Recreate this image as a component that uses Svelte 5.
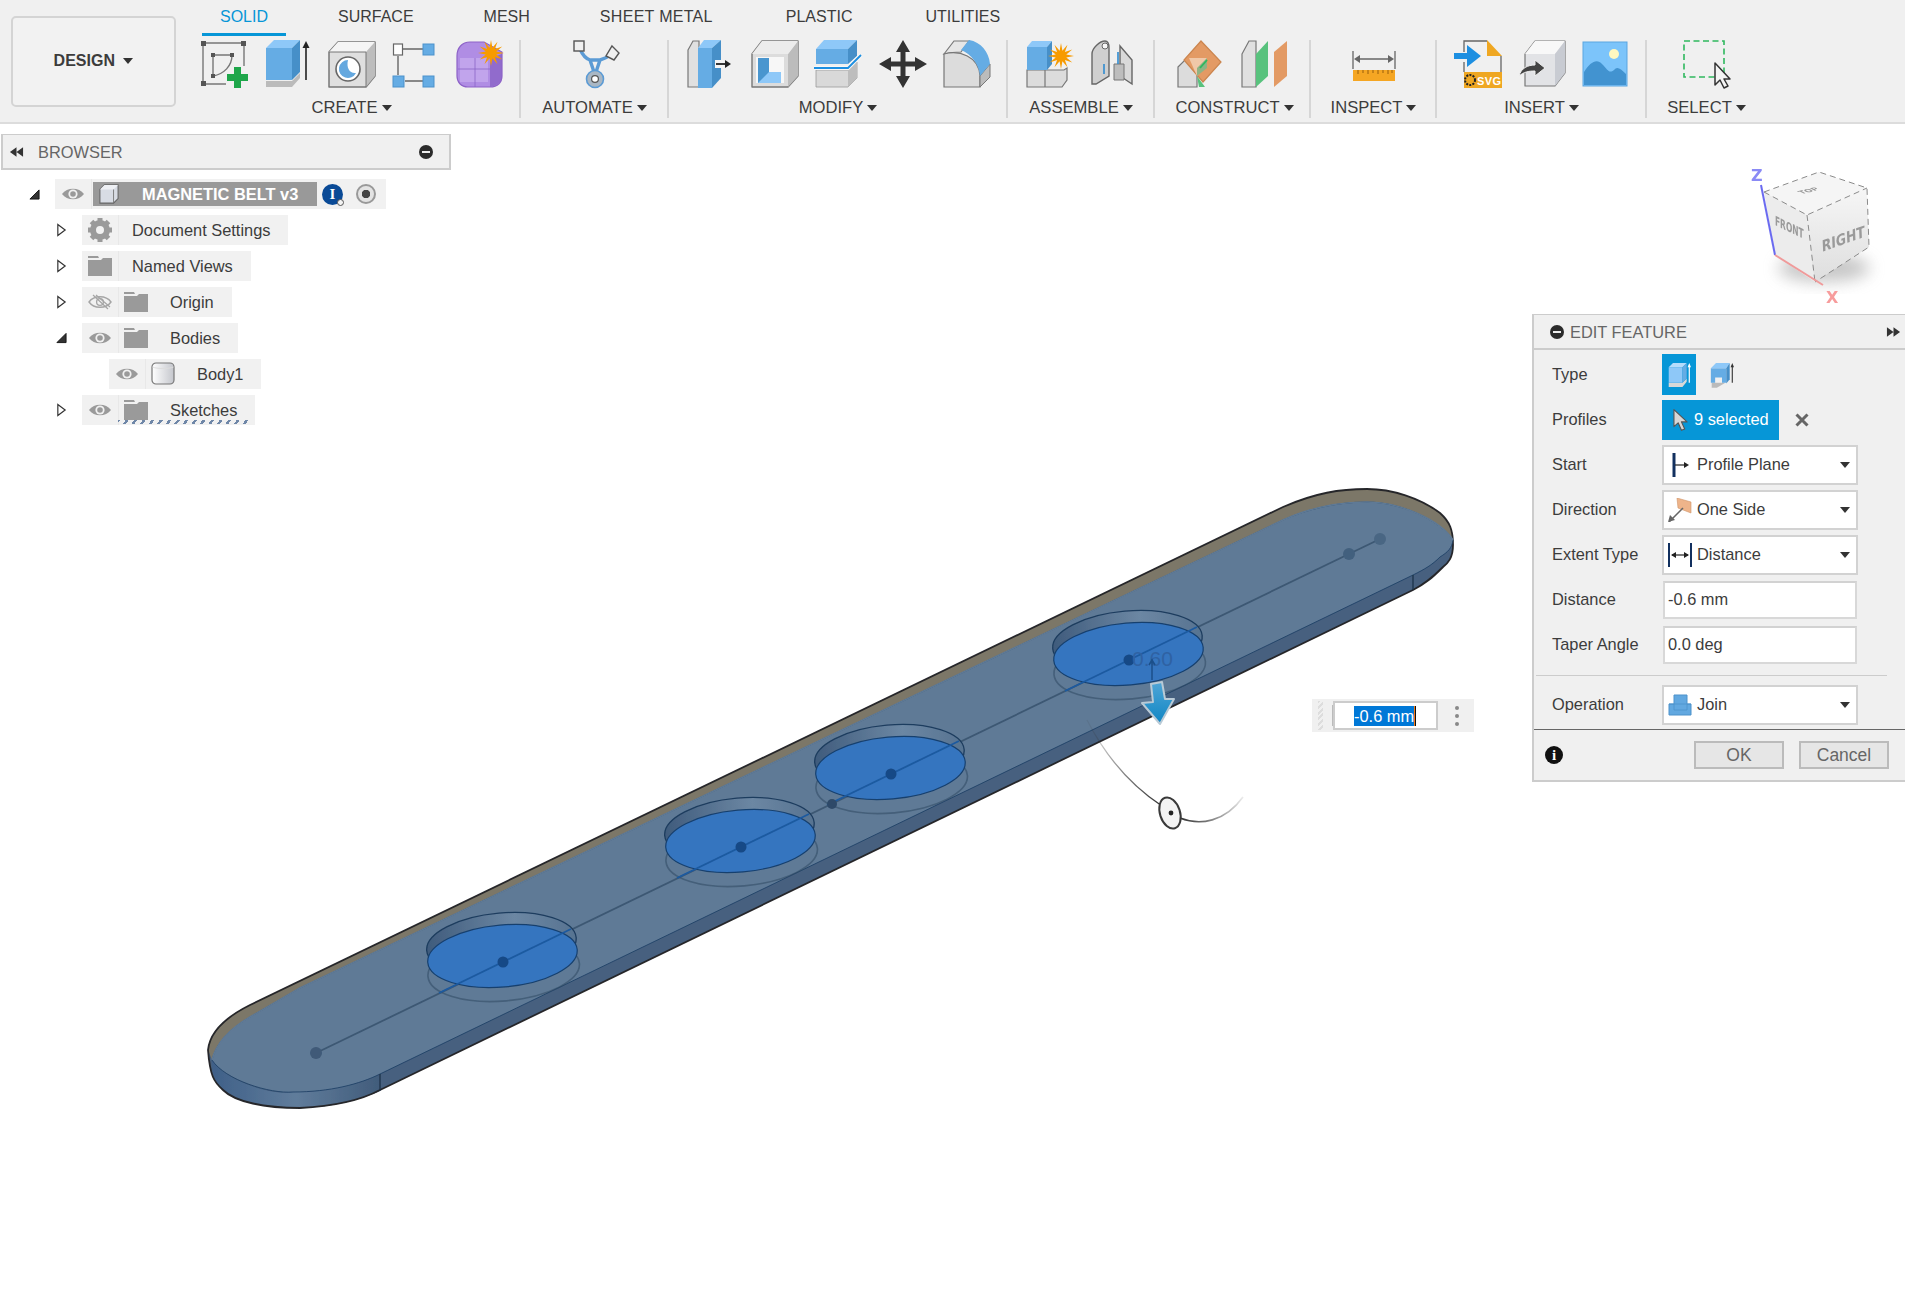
<script lang="ts">
	const tabs = ["SOLID", "SURFACE", "MESH", "SHEET METAL", "PLASTIC", "UTILITIES"];

	const treeRows = [
		{ name: "Document Settings", depth: 1, arrow: "closed", eye: null, icon: "gear" },
		{ name: "Named Views", depth: 1, arrow: "closed", eye: null, icon: "folder" },
		{ name: "Origin", depth: 1, arrow: "closed", eye: "off", icon: "folder" },
		{ name: "Bodies", depth: 1, arrow: "open", eye: "on", icon: "folder" },
		{ name: "Body1", depth: 2, arrow: null, eye: "on", icon: "body" },
		{ name: "Sketches", depth: 1, arrow: "closed", eye: "on", icon: "folder", wavy: true }
	];

	// hole centres along the sketch line of the belt
	const holes = [
		[503, 962],
		[741, 847],
		[891, 774],
		[1129, 660]
	];

	const outline =
		"M208 1050C210 1030 228 1016 250 1005L1283 507C1315 493 1340 489 1367 489C1392 489 1420 498 1440 513C1450 522 1453 530 1453 545C1453 558 1448 563 1443 567C1432 578 1425 584 1413 590L380 1090C365 1098 340 1106 300 1108C265 1108 235 1102 223 1090C214 1082 210 1076 208 1050Z";

	function star(cx: number, cy: number, R: number, r: number, n = 12) {
		const pts = [];
		for (let i = 0; i < n * 2; i++) {
			const a = (Math.PI * i) / n;
			const d = i % 2 ? r : R;
			pts.push(`${(cx + Math.sin(a) * d).toFixed(1)},${(cy - Math.cos(a) * d).toFixed(1)}`);
		}
		return pts.join(" ");
	}
</script>

{#snippet eye(state)}
	<svg class="mini" viewBox="0 0 24 16">
		<path d="M1 8C6 1 18 1 23 8C18 15 6 15 1 8Z" fill={state === "on" ? "#9a9a9a" : "none"} stroke={state === "on" ? "none" : "#a5a5a5"} stroke-width="1.4" />
		{#if state === "on"}
			<circle cx="12" cy="8" r="4.6" fill="#f0f0f0" />
			<circle cx="12" cy="8" r="2.8" fill="#9a9a9a" />
		{:else}
			<circle cx="12" cy="8" r="3.4" fill="none" stroke="#a5a5a5" stroke-width="1.3" />
			<path d="M5 1L20 15M8 1L22 13" stroke="#a5a5a5" stroke-width="1.2" />
		{/if}
	</svg>
{/snippet}

{#snippet treeIcon(kind)}
	{#if kind === "gear"}
		<svg class="mini tall" viewBox="0 0 24 24">
			<circle cx="12" cy="12" r="7" fill="none" stroke="#9a9a9a" stroke-width="6" />
			<g stroke="#9a9a9a" stroke-width="5">
				<path d="M12 0V5M12 19V24M0 12H5M19 12H24M3.5 3.5L7 7M17 17L20.5 20.5M20.5 3.5L17 7M3.5 20.5L7 17" />
			</g>
		</svg>
	{:else if kind === "folder"}
		<svg class="mini tall" viewBox="0 0 24 20">
			<path d="M0 0H10L11 2H0ZM0 4H13L15 2H24V20H0Z" fill="#9a9a9a" />
		</svg>
	{:else}
		<svg class="mini tall" viewBox="0 0 24 24">
			<defs>
				<linearGradient id="bodyFill" x1="0" x2="1">
					<stop offset="0" stop-color="#fff" />
					<stop offset="1" stop-color="#c4c6cc" />
				</linearGradient>
			</defs>
			<rect x="1" y="1" width="22" height="21" rx="4" fill="url(#bodyFill)" stroke="#777" stroke-width="1.2" />
			<path d="M1.5 5C6 7 18 7 22.5 5" fill="none" stroke="#ddd" />
		</svg>
	{/if}
{/snippet}

{#snippet caret()}
	<i class="caret"></i>
{/snippet}

<div class="page">
	<svg class="model" viewBox="0 0 1905 1312">
		<defs>
			<linearGradient id="wall" x1="0" x2="1">
				<stop offset="0" stop-color="#3f5b7c" />
				<stop offset="0.6" stop-color="#6c87a3" />
				<stop offset="1" stop-color="#577391" />
			</linearGradient>
			<linearGradient id="sideArc" x1="0" x2="1">
				<stop offset="0" stop-color="#3f6088" />
				<stop offset="0.5" stop-color="#607c9b" />
				<stop offset="1" stop-color="#415c7b" />
			</linearGradient>
			<linearGradient id="arrowFill" x1="0" x2="0" y1="0" y2="1">
				<stop offset="0" stop-color="#4fa5d6" />
				<stop offset="1" stop-color="#0f86c4" />
			</linearGradient>
			<linearGradient id="arcIn" gradientUnits="userSpaceOnUse" x1="1090" y1="725" x2="1160" y2="805">
				<stop offset="0" stop-color="#333" stop-opacity="0.1" />
				<stop offset="1" stop-color="#333" />
			</linearGradient>
			<linearGradient id="arcOut" gradientUnits="userSpaceOnUse" x1="1180" y1="818" x2="1243" y2="797">
				<stop offset="0" stop-color="#333" />
				<stop offset="1" stop-color="#333" stop-opacity="0.1" />
			</linearGradient>
			<filter id="soft" x="-5%" y="-5%" width="110%" height="110%">
				<feGaussianBlur stdDeviation="0.5" />
			</filter>
		</defs>

		<g filter="url(#soft)">
			<!-- silhouette with side wall -->
			<path d={outline} fill="#46607f" />
			<path d="M212 1060C225 1080 270 1096 293 1092C330 1092 360 1084 380 1074V1091C360 1100 335 1107 300 1108C265 1108 235 1102 223 1090C214 1082 212 1075 212 1060Z" fill="url(#sideArc)" />
			<!-- back band -->
			<path
				d="M208 1050C210 1030 228 1016 250 1005L1283 507C1315 493 1340 489 1367 489C1392 489 1420 498 1440 513C1450 522 1453 530 1453 540C1440 520 1400 502 1367 502C1335 502 1305 510 1283 520L300 988L250 1017C228 1030 216 1044 212 1060Z"
				fill="#7c7768"
			/>
			<path d={outline} fill="none" stroke="#26272a" stroke-width="1.8" />
			<!-- top face -->
			<path
				d="M212 1060C216 1044 228 1030 250 1017L300 988L1283 520C1305 510 1335 502 1367 502C1400 502 1440 520 1453 540C1452 548 1448 552 1440 557C1432 565 1425 569 1413 575L380 1074C360 1084 330 1092 293 1092C270 1094 225 1080 212 1060Z"
				fill="#5f7a96"
				stroke="#173a60"
				stroke-width="1"
				stroke-opacity="0.75"
			/>
			<path d="M212 1060C216 1044 228 1030 250 1017L300 988L1283 520C1305 510 1335 502 1367 502C1400 502 1440 520 1453 540" fill="none" stroke="#5f7a96" stroke-width="1.6" />
			<path d="M380 1074V1091M1413 575V590" stroke="#1c2f45" stroke-width="1.2" />

			<!-- sketch line -->
			<path d="M316 1053L1380 539" stroke="#3d5873" stroke-width="1.8" />

			{#each holes as [x, y]}
				<g transform="rotate(-5 {x} {y})">
					<ellipse cx={x} cy={y + 8} rx="76" ry="31" fill="none" stroke="#2e4863" stroke-opacity="0.55" stroke-width="1.6" />
					<ellipse cx={x} cy={y - 18} rx="75" ry="31" fill="url(#wall)" stroke="#1d3c5e" stroke-width="1.3" />
					<ellipse cx={x} cy={y - 6} rx="75" ry="31" fill="#3574bf" stroke="#17406e" stroke-width="1.2" />
				</g>
				<path d="M{x - 64} {y + 31}L{x + 68} {y - 33}" stroke="#1c5aa0" stroke-width="1.8" />
				<circle cx={x} cy={y} r="5.5" fill="#174a86" />
			{/each}

			<circle cx="316" cy="1053" r="6" fill="#3f5a78" />
			<circle cx="832" cy="804" r="5" fill="#2f4a68" />
			<circle cx="1349" cy="554" r="6" fill="#42607e" />
			<circle cx="1380" cy="539" r="6" fill="#4a6683" />
		</g>

		<text x="1132" y="666" class="dim-text">0.60</text>
		<path d="M1152 659V680M1149 665L1152 660L1155 665" fill="none" stroke="#1b4f8a" stroke-width="1.5" />

		<!-- drag arrow -->
		<path d="M1151 684L1162 682L1165 699L1174 699L1160 724L1142 703L1153 702Z" fill="url(#arrowFill)" stroke="#b9cad6" stroke-width="2" stroke-linejoin="round" />

		<!-- angle handle -->
		<path d="M1087 720C1105 755 1130 785 1162 806" fill="none" stroke="url(#arcIn)" stroke-width="1.3" />
		<path d="M1180 818C1200 826 1225 822 1243 797" fill="none" stroke="url(#arcOut)" stroke-width="1.6" />
		<ellipse cx="1170" cy="813" rx="10" ry="16" transform="rotate(-18 1170 813)" fill="#f3f3f3" stroke="#3a3a3a" stroke-width="2" />
		<circle cx="1171" cy="813" r="2.4" fill="#222" />
	</svg>

	<header class="toolbar">
		<button class="design" type="button">DESIGN {@render caret()}</button>
		<div class="ribbon">
			<nav class="tabs">
				{#each tabs as tab, i}
					<span class="tab" class:active={i === 0}>{tab}</span>
				{/each}
			</nav>
			<div class="groups">
				<section class="group g-create">
					<div class="icons">
						<svg class="tool" viewBox="0 0 48 48">
							<path d="M3 3H44M3 3V44M3 44H26M44 3V26M13 15H32M13 15V36M13 36C24 34 32 26 32 15" fill="none" stroke="#777" stroke-width="1.4" />
							<path d="M1 1h5v5H1zM41 1h5v5h-5zM1 41h5v5H1zM11 13h4v4h-4zM30 13h4v4h-4zM11 34h4v4h-4z" fill="#555" />
							<path d="M34 27h7v7h7v7h-7v7h-7v-7h-7v-7h7z" fill="#1ea64a" />
						</svg>
						<svg class="tool" viewBox="0 0 48 48">
							<path d="M2 41H28L36 33V38L28 47H2Z" fill="#bbb" />
							<path d="M2 8H28V40H2Z" fill="#65ace4" />
							<path d="M2 8L10 0H36L28 8Z" fill="#8ec8f8" />
							<path d="M28 8L36 0V32L28 40Z" fill="#468fc8" />
							<path d="M42 6V40" stroke="#222" stroke-width="1.6" />
							<path d="M38.5 8L42 1L45.5 8Z" fill="#222" />
						</svg>
						<svg class="tool" viewBox="0 0 48 48">
							<path d="M1 12L10 2H47V36L38 47H1Z" fill="#dfdfdf" stroke="#777" stroke-width="1.5" stroke-linejoin="round" />
							<path d="M1 12L10 2H47L38 12Z" fill="#f5f5f5" />
							<path d="M38 12L47 2V36L38 47Z" fill="#bdbdbd" />
							<path d="M1 12H38V47" fill="none" stroke="#777" stroke-width="1" />
							<circle cx="20" cy="29" r="12" fill="#fff" stroke="#666" stroke-width="1.6" />
							<path d="M20 20A9 9 0 1 0 28 33C22 34 18 28 20 20Z" fill="#64a8df" />
						</svg>
						<svg class="tool" viewBox="0 0 48 48">
							<path d="M10 9H31M6 16V35M13 41H31" stroke="#666" stroke-width="1.4" />
							<rect x="1.5" y="4" width="9" height="11" fill="#fff" stroke="#666" stroke-width="1.2" />
							<rect x="31" y="4" width="11" height="11" fill="#65ace4" stroke="#4d92cb" />
							<rect x="1" y="36" width="11" height="11" fill="#65ace4" stroke="#4d92cb" />
							<rect x="31" y="36" width="11" height="11" fill="#65ace4" stroke="#4d92cb" />
						</svg>
						<svg class="tool" viewBox="0 0 48 48">
							<path d="M1 16C1 8 6 2 14 2H28L46 12V36C46 42 42 47 34 47H12C5 47 1 42 1 36Z" fill="#b08de4" stroke="#8e63c8" stroke-width="1.2" />
							<path d="M4 18H32V42H4Z" fill="#c9aef0" opacity="0.7" />
							<path d="M34 18L46 14V36C46 42 40 46 34 47Z" fill="#8a63c6" opacity="0.8" />
							<path d="M2 29H34M19 18V47" fill="none" stroke="#8c64c8" stroke-width="0.8" />
							<polygon points={star(35, 13, 13, 5.5)} fill="#f79b00" />
						</svg>
					</div>
					<div class="label">CREATE{@render caret()}</div>
				</section>

				<section class="group g-automate">
					<div class="icons">
						<svg class="tool" viewBox="0 0 48 48">
							<path d="M9 9C12 16 16 19 19 20H29C33 19 37 17 41 14M19 20L23 32M29 20L25 32" fill="none" stroke="#5b9bd5" stroke-width="3.4" />
							<circle cx="24" cy="39" r="8.5" fill="#a9b7c4" stroke="#5b9bd5" stroke-width="1.6" />
							<circle cx="24" cy="39" r="3.4" fill="#fff" stroke="#555" stroke-width="1.2" />
							<rect x="3" y="1" width="10" height="10" fill="#f0f0f0" stroke="#555" stroke-width="1.4" />
							<path d="M41 6L48 13L43 20L35 16Z" fill="#f0f0f0" stroke="#555" stroke-width="1.4" />
						</svg>
					</div>
					<div class="label">AUTOMATE{@render caret()}</div>
				</section>

				<section class="group g-modify">
					<div class="icons">
						<svg class="tool" viewBox="0 0 48 48">
							<path d="M1 10L6 1H12V47H1Z" fill="#e0e0e0" stroke="#777" stroke-width="1.2" />
							<path d="M11 8H25V48H11Z" fill="#65ace4" />
							<path d="M11 8L17 0H34L25 8Z" fill="#8ec8f8" />
							<path d="M25 8L34 0V38L25 48Z" fill="#468fc8" />
							<path d="M28 20H37V28H28Z" fill="#f5f5f5" />
							<path d="M29 24H39" stroke="#222" stroke-width="1.8" />
							<path d="M38 20L44 24L38 28Z" fill="#222" />
						</svg>
						<svg class="tool" viewBox="0 0 48 48">
							<path d="M1 14L11 1H47V36L37 47H1Z" fill="#dcdcdc" stroke="#777" stroke-width="1.4" stroke-linejoin="round" />
							<path d="M37 14L47 1V36L37 47Z" fill="#bcbcbc" />
							<path d="M1 14L11 1H47L37 14Z" fill="#ececec" />
							<rect x="5" y="17" width="28" height="26" fill="#f7f7f7" />
							<path d="M7 18H18V32H30V43H7Z" fill="#4a96cf" />
							<path d="M18 32H30V43H7Z" fill="#8ec8f8" />
						</svg>
						<svg class="tool" viewBox="0 0 48 48">
							<path d="M1 30H33L42 22V38L33 47H1Z" fill="#d9d9d9" stroke="#999" stroke-width="0.8" />
							<path d="M33 30L42 22V38L33 47Z" fill="#bdbdbd" />
							<path d="M1 9H33V24H1Z" fill="#65ace4" />
							<path d="M1 9L9 0H42L33 9Z" fill="#8ec8f8" />
							<path d="M33 9L42 0V16L33 24Z" fill="#468fc8" />
							<path d="M-1 28H33L46 15" fill="none" stroke="#f7f7f7" stroke-width="4" />
							<path d="M-1 28H33L46 15" fill="none" stroke="#1d8fe1" stroke-width="1.8" />
						</svg>
						<svg class="tool" viewBox="0 0 48 48">
							<path d="M24 0L31 12H26.5V21.5H36V17L48 24L36 31V26.5H26.5V36H31L24 48L17 36H21.5V26.5H12V31L0 24L12 17V21.5H21.5V12H17Z" fill="#333" />
						</svg>
						<svg class="tool" viewBox="0 0 48 48">
							<path d="M1 14L11 1H26L18 12C10 12 5 13 1 14Z" fill="#e6e6e6" stroke="#777" stroke-width="1.2" />
							<path d="M1 14C16 10 36 16 37 36V47H1Z" fill="#dcdcdc" stroke="#777" stroke-width="1.2" />
							<path d="M37 36L47 24V37L37 47Z" fill="#bcbcbc" stroke="#777" stroke-width="1" />
							<path d="M18 10L26 0C38 2 46 12 47 24L37 36C36 24 28 14 18 10Z" fill="#65ace4" />
						</svg>
					</div>
					<div class="label">MODIFY{@render caret()}</div>
				</section>

				<section class="group g-assemble">
					<div class="icons">
						<svg class="tool" viewBox="0 0 48 48">
							<path d="M1 30H19V47H1ZM19 30H38L41 28V40L36 47H19Z" fill="#dcdcdc" stroke="#777" stroke-width="1.2" />
							<path d="M1 7H21V30H1Z" fill="#65ace4" />
							<path d="M1 7L6 1H26L21 7Z" fill="#8ec8f8" />
							<path d="M21 7L26 1V24L21 30Z" fill="#468fc8" />
							<polygon points={star(35, 16, 13, 5.5)} fill="#f79b00" />
						</svg>
						<svg class="tool" viewBox="0 0 48 48">
							<path d="M2 14C2 8 10 1 15 1C18 1 19 4 19 8V36L6 44H2Z" fill="#cfcfcf" stroke="#666" stroke-width="1.4" />
							<ellipse cx="15" cy="6" rx="3" ry="3" fill="#f5f5f5" stroke="#666" />
							<path d="M30 6L42 20V44L30 36Z" fill="#d9d9d9" stroke="#666" stroke-width="1.4" />
							<path d="M24 24H34V40H24Z" fill="#bdbdbd" stroke="#777" />
							<path d="M14 24V34M28 12V24" stroke="#2f8bd0" stroke-width="1.6" />
						</svg>
					</div>
					<div class="label">ASSEMBLE{@render caret()}</div>
				</section>

				<section class="group g-construct">
					<div class="icons">
						<svg class="tool" viewBox="0 0 48 48">
							<path d="M1 27L8 20H20V47H1Z" fill="#dcdcdc" stroke="#777" stroke-width="1.2" />
							<path d="M20 36L22 47H28Z" fill="#58c27d" />
							<path d="M24 1L44 22L26 42L7 20Z" fill="#e39a64" stroke="#cb854e" stroke-width="1.2" />
							<path d="M12 18H30L26 30L20 36Z" fill="#f0c8a8" />
							<path d="M20 36V28L30 18V28Z" fill="#8fb384" />
							<path d="M23 28L30 20" stroke="#2fb85e" stroke-width="1.8" />
						</svg>
						<svg class="tool" viewBox="0 0 48 48">
							<path d="M1 14L8 1H15V47H1Z" fill="#e0e0e0" stroke="#777" stroke-width="1.2" />
							<path d="M15 14L27 1V36L15 47Z" fill="#58c27d" />
							<path d="M33 12L46 1V36L33 47Z" fill="#e39a64" />
						</svg>
					</div>
					<div class="label construct-label">CONSTRUCT{@render caret()}</div>
				</section>

				<section class="group g-inspect">
					<div class="icons">
						<svg class="tool" viewBox="0 0 48 48">
							<path d="M3 11V29M45 11V29M7 19H41" stroke="#666" stroke-width="1.3" />
							<path d="M4 19L10 15V23ZM44 19L38 15V23Z" fill="#666" />
							<rect x="3" y="30" width="42" height="11" fill="#f5a623" />
							<path d="M8 30v4M13 30v3M18 30v4M23 30v3M28 30v4M33 30v3M38 30v4M42 30v3" stroke="#a86a10" stroke-width="1.2" />
						</svg>
					</div>
					<div class="label">INSPECT{@render caret()}</div>
				</section>

				<section class="group g-insert">
					<div class="icons">
						<svg class="tool" viewBox="0 0 48 48">
							<path d="M10 12V1H33M47 16V32M10 22V32" fill="none" stroke="#666" stroke-width="1.3" />
							<path d="M33 0L48 16H33Z" fill="#efa722" />
							<path d="M0 13H13V5L27 16L13 27V19H0Z" fill="#1d8fe1" />
							<rect x="10" y="32" width="38" height="16" fill="#efa722" />
							<circle cx="16" cy="40" r="5" fill="none" stroke="#222" stroke-width="2" stroke-dasharray="2 1.2" />
							<text x="23" y="45" class="svg-tag">SVG</text>
						</svg>
						<svg class="tool" viewBox="0 0 48 48">
							<path d="M7 14L17 1H47V33L37 46H7Z" fill="#e2e3e6" stroke="#777" stroke-width="1.2" stroke-linejoin="round" />
							<path d="M7 14L17 1H47L37 14Z" fill="#f8f8f8" />
							<path d="M37 14L47 1V33L37 46Z" fill="#c8cbd2" />
							<path d="M1 36C3 28 10 25 17 25V20L27 28L17 36V31C10 31 6 32 1 36Z" fill="#444" stroke="#f0f0f0" stroke-width="1" />
						</svg>
						<svg class="tool" viewBox="0 0 48 48">
							<rect x="1" y="2" width="44" height="44" fill="#7cc4fa" stroke="#5aa5e0" />
							<circle cx="32" cy="14" r="5" fill="#fff8c0" />
							<path d="M2 45V32C8 22 15 18 20 24C26 30 27 34 32 30C35 26 38 28 44 34V45Z" fill="#4293d0" />
						</svg>
					</div>
					<div class="label">INSERT{@render caret()}</div>
				</section>

				<section class="group g-select">
					<div class="icons">
						<svg class="tool" viewBox="0 0 48 48">
							<rect x="1" y="1" width="40" height="36" fill="none" stroke="#2fb85e" stroke-width="1.6" stroke-dasharray="6 3.5" />
							<path d="M32 23V45L37 40L41 48L45 46L41 39H47Z" fill="#f4f4f4" stroke="#333" stroke-width="1.5" stroke-linejoin="round" />
						</svg>
					</div>
					<div class="label">SELECT{@render caret()}</div>
				</section>
			</div>
		</div>
	</header>

	<section class="browser">
		<div class="browser-head">
			<svg class="double" viewBox="0 0 16 10"><path d="M8 0V10L1 5ZM15 0V10L8 5Z" fill="#333" /></svg>
			<span>BROWSER</span>
			<span class="minus"></span>
		</div>

		<ul class="tree">
			<li class="tree-row root">
				<span class="arrow"><svg viewBox="0 0 12 12"><path d="M11 1V11H1Z" fill="#333" stroke="#111" /></svg></span>
				<div class="chip">
					<span class="slot eye-slot">{@render eye("on")}</span>
					<div class="root-name">
						<svg class="mini cube" viewBox="0 0 22 22">
							<path d="M1 6L6 1H21V16L16 21H1Z" fill="#d8dce4" stroke="#666" stroke-width="1.2" />
							<path d="M1 6L6 1H21L16 6Z" fill="#eef0f4" />
							<path d="M16 6V21" stroke="#777" />
						</svg>
						<span>MAGNETIC BELT v3</span>
					</div>
					<span class="badge">I<i></i></span>
					<span class="radio"></span>
				</div>
			</li>
			{#each treeRows as row}
				<li class="tree-row" style="margin-left: {row.depth * 27}px">
					<span class="arrow">
						{#if row.arrow === "closed"}
							<svg viewBox="0 0 12 14"><path d="M2 1L10 7L2 13Z" fill="#fff" stroke="#333" stroke-width="1.3" /></svg>
						{:else if row.arrow === "open"}
							<svg viewBox="0 0 12 12"><path d="M11 1V11H1Z" fill="#333" stroke="#111" /></svg>
						{/if}
					</span>
					<div class="chip" class:wavy={row.wavy}>
						{#if row.eye}
							<span class="slot eye-slot">{@render eye(row.eye)}</span>
							<span class="plain-icon">{@render treeIcon(row.icon)}</span>
						{:else}
							<span class="slot eye-slot">{@render treeIcon(row.icon)}</span>
						{/if}
						<span class="row-name" class:after-icon={row.eye}>{row.name}</span>
					</div>
				</li>
			{/each}
		</ul>
	</section>

	<svg class="viewcube" viewBox="0 0 185 170">
		<defs>
			<linearGradient id="cubeRight" x1="0" x2="0" y1="0" y2="1">
				<stop offset="0" stop-color="#f6f6f6" />
				<stop offset="1" stop-color="#dedede" />
			</linearGradient>
			<filter id="cubeBlur"><feGaussianBlur stdDeviation="0.5" /></filter>
			<filter id="shadowBlur" x="-40%" y="-40%" width="180%" height="180%"><feGaussianBlur stdDeviation="8" /></filter>
		</defs>
		<ellipse cx="104" cy="128" rx="46" ry="14" fill="#999" opacity="0.55" filter="url(#shadowBlur)" />
		<g filter="url(#cubeBlur)">
			<path d="M44 52L99 32L147 48L87 75Z" fill="#f5f5f5" />
			<path d="M44 52L87 75L95 142L55 115Z" fill="#ececec" />
			<path d="M87 75L147 48L149 107L95 142Z" fill="url(#cubeRight)" />
			<path d="M44 52L99 32L147 48L149 107L95 142M44 52L87 75L147 48M87 75L95 142" fill="none" stroke="#8a8a8a" stroke-width="1" stroke-dasharray="6 4" />
			<path d="M41 45L55 115" stroke="#6a6af0" stroke-width="2" />
			<path d="M55 115L103 145" stroke="#f09a9a" stroke-width="2" />
			<text transform="matrix(0.95 -0.34 0.05 1.2 102 112)" class="cube-text right">RIGHT</text>
			<text transform="matrix(0.75 0.36 0 1.3 55 85)" class="cube-text front">FRONT</text>
			<text transform="matrix(0.8 -0.2 0.7 0.35 82 54)" class="cube-text front">TOP</text>
			<text x="31" y="41" class="axis z">Z</text>
			<text x="106" y="163" class="axis x">X</text>
		</g>
	</svg>

	<div class="quick-input">
		<span class="grip"></span>
		<div class="value-box"><span class="selected-text">-0.6 mm</span><i class="text-caret"></i></div>
		<div class="dots"><i></i><i></i><i></i></div>
	</div>

	<aside class="panel">
		<div class="panel-head">
			<span class="minus"></span>
			<span class="panel-title">EDIT FEATURE</span>
			<svg class="double" viewBox="0 0 16 10"><path d="M1 0V10L8 5ZM8 0V10L15 5Z" fill="#333" /></svg>
		</div>

		<div class="panel-body">
			<div class="row">
				<span class="field">Type</span>
				<span class="type-btn on">
					<svg viewBox="0 0 28 30">
						<path d="M2 24H18L23 19V23L18 29H2Z" fill="#d8d8d8" />
						<path d="M2 6H18V24H2Z" fill="#8ec8f8" />
						<path d="M2 6L7 1H23L18 6Z" fill="#b5dcfb" />
						<path d="M18 6L23 1V19L18 24Z" fill="#65ace4" />
						<path d="M26 4V24" stroke="#fff" stroke-width="1.4" />
						<path d="M24 6L26 1L28 6Z" fill="#fff" />
					</svg>
				</span>
				<span class="type-btn">
					<svg viewBox="0 0 28 30">
						<path d="M2 24V30H8L18 24Z" fill="#bbb" />
						<path d="M1 7H19V24H14V18H6V24H1Z" fill="#65ace4" />
						<path d="M1 7L7 1H23L19 7Z" fill="#8ec8f8" />
						<path d="M19 7L23 1V20L19 25Z" fill="#468fc8" />
						<path d="M26 4V24" stroke="#333" stroke-width="1.3" />
						<path d="M24 6L26 1L28 6Z" fill="#333" />
					</svg>
				</span>
			</div>

			<div class="row">
				<span class="field">Profiles</span>
				<span class="profiles">
					<svg viewBox="0 0 16 24"><path d="M1 1V19L5.500 15L9 23L12.500 21.500L9 14H15Z" fill="#d6d6d6" stroke="#555" stroke-width="1.200" stroke-linejoin="round" /></svg>
					9 selected
				</span>
				<svg class="clear" viewBox="0 0 14 14"><path d="M1.500 1.500L12.500 12.500M12.500 1.500L1.500 12.500" stroke="#666" stroke-width="3" /></svg>
			</div>

			<div class="row">
				<span class="field">Start</span>
				<div class="select">
					<span class="select-icon">
						<svg viewBox="0 0 24 24"><path d="M6 0V24" stroke="#12305f" stroke-width="3" /><path d="M7 12H17" stroke="#222" stroke-width="1.200" /><path d="M16 9L21 12L16 15Z" fill="#222" /></svg>
					</span>
					Profile Plane
					<i class="select-caret"></i>
				</div>
			</div>

			<div class="row">
				<span class="field">Direction</span>
				<div class="select">
					<span class="select-icon">
						<svg viewBox="0 0 24 24"><path d="M9 0L23 4V15L10 10Z" fill="#eeb48a" stroke="#cf9468" stroke-width="0.600" /><path d="M1 24L15 10" stroke="#666" stroke-width="1.500" /><path d="M0 24L2 17L7 22Z" fill="#666" /></svg>
					</span>
					One Side
					<i class="select-caret"></i>
				</div>
			</div>

			<div class="row">
				<span class="field">Extent Type</span>
				<div class="select">
					<span class="select-icon">
						<svg viewBox="0 0 24 24"><path d="M1 0V24M23 0V24" stroke="#12305f" stroke-width="2" /><path d="M4 12H20" stroke="#222" stroke-width="1.200" /><path d="M8 9L3 12L8 15ZM16 9L21 12L16 15Z" fill="#222" /></svg>
					</span>
					Distance
					<i class="select-caret"></i>
				</div>
			</div>

			<div class="row">
				<span class="field">Distance</span>
				<div class="input">-0.6 mm</div>
			</div>

			<div class="row">
				<span class="field">Taper Angle</span>
				<div class="input">0.0 deg</div>
			</div>

			<hr class="divider" />

			<div class="row">
				<span class="field">Operation</span>
				<div class="select">
					<span class="select-icon">
						<svg viewBox="0 0 24 24"><path d="M6 2H19V11H23V22H1V11H6Z" fill="#62a8e0" stroke="#4d92cb" /><path d="M1 11H23M6 11V17H19V11" fill="none" stroke="#4d92cb" stroke-width="0.800" /></svg>
					</span>
					Join
					<i class="select-caret"></i>
				</div>
			</div>
		</div>

		<footer class="panel-foot">
			<span class="info">i</span>
			<button class="btn ok" type="button">OK</button>
			<button class="btn" type="button">Cancel</button>
		</footer>
	</aside>
</div>

<style>
	:global(body) {
		margin: 0;
		background: #fff;
	}

	.page {
		position: relative;
		width: 1905px;
		height: 1312px;
		overflow: hidden;
		background: #fff;
		font-family: "Liberation Sans", Arial, sans-serif;
		font-size: 16.4px;
		color: #3c3c3c;
	}

	.model {
		position: absolute;
		inset: 0;
		width: 1905px;
		height: 1312px;
	}

	.dim-text {
		font-size: 21px;
		fill: #2f62a3;
	}

	/* ribbon */
	.toolbar {
		position: relative;
		display: flex;
		height: 122px;
		box-sizing: content-box;
		padding-left: 11px;
		background: #f0f0f0;
		border-bottom: 2px solid #dcdcdc;
	}

	.design {
		width: 165px;
		height: 91px;
		margin-top: 16px;
		margin-right: 7px;
		padding-bottom: 2px;
		background: #f2f2f2;
		border: 2px solid #d4d4d4;
		border-radius: 5px;
		font: bold 16px "Liberation Sans", Arial, sans-serif;
		color: #3c3c3c;
	}

	.caret {
		display: inline-block;
		width: 0;
		height: 0;
		margin-left: 4px;
		vertical-align: 2px;
		border-left: 5px solid transparent;
		border-right: 5px solid transparent;
		border-top: 6px solid #333;
	}

	.ribbon {
		display: flex;
		flex-direction: column;
	}

	.tabs {
		display: flex;
		gap: 34px;
		height: 36px;
		margin-left: 19px;
	}

	.tab {
		box-sizing: border-box;
		height: 36px;
		padding: 8px 18px 0;
		font-size: 16px;
		line-height: 18px;
		white-space: nowrap;
	}

	.tab:nth-child(4) {
		letter-spacing: 0.3px;
	}

	.tab:nth-child(5) {
		margin-left: 3px;
	}

	.tab:nth-child(6) {
		margin-left: 3px;
	}

	.tab.active {
		color: #0696d7;
		border-bottom: 3px solid #0696d7;
	}

	.groups {
		display: flex;
		margin-top: 4px;
	}

	.group {
		box-sizing: border-box;
		display: flex;
		flex-direction: column;
		align-items: center;
		height: 78px;
		border-right: 2px solid #d6d6d6;
	}

	.g-create { width: 338px; }
	.g-automate { width: 148px; }
	.g-modify { width: 339px; }
	.g-assemble { width: 147px; }
	.g-construct { width: 156px; }
	.g-inspect { width: 126px; }
	.g-insert { width: 210px; }
	.g-select { width: 118px; border-right: 0; }

	.icons {
		display: flex;
		gap: 16px;
		height: 48px;
		margin-left: 2px;
	}

	.tool {
		width: 48px;
		height: 48px;
		overflow: visible;
	}

	.svg-tag {
		font: bold 11px "Liberation Sans", Arial, sans-serif;
		fill: #fff;
		letter-spacing: 0.4px;
	}

	.label {
		margin-top: 10px;
		padding-left: 1px;
		font-size: 16.6px;
		line-height: 20px;
		white-space: nowrap;
	}

	.construct-label {
		padding-left: 5px;
	}

	/* browser */
	.browser {
		position: relative;
		margin: 10px 0 0 1px;
		width: 450px;
	}

	.browser-head {
		box-sizing: border-box;
		display: flex;
		align-items: center;
		height: 36px;
		padding: 1px 16px 0 6px;
		background: #f0f0f0;
		border: 2px solid #ccc;
		border-top-width: 1px;
		color: #666;
	}

	.browser-head > span:nth-of-type(1) {
		margin-left: 14px;
		flex: 1;
	}

	.double {
		width: 15px;
		height: 10px;
	}

	.minus {
		position: relative;
		display: block;
		flex: none;
		width: 14px;
		height: 14px;
		border-radius: 50%;
		background: #2b2b2b;
	}

	.minus::after {
		content: "";
		position: absolute;
		left: 3px;
		right: 3px;
		top: 6px;
		height: 2px;
		background: #eee;
	}

	.tree {
		list-style: none;
		margin: 9px 0 0;
		padding: 0 0 0 27px;
		display: flex;
		flex-direction: column;
		gap: 6px;
	}

	.tree-row {
		display: flex;
		align-items: center;
		height: 30px;
	}

	.arrow {
		display: flex;
		flex: none;
		width: 27px;
		align-items: center;
		padding-left: 1px;
		box-sizing: border-box;
	}

	.arrow svg {
		width: 11px;
		height: 14px;
	}

	.root .arrow svg {
		height: 11px;
	}

	.chip {
		position: relative;
		display: flex;
		align-items: center;
		height: 30px;
		padding-right: 18px;
		background: #f1f1f1;
	}

	.root .chip {
		padding-right: 0;
		width: 331px;
	}

	.slot {
		display: flex;
		flex: none;
		align-items: center;
		justify-content: center;
		width: 37px;
		height: 30px;
		border-right: 1px solid #e8e8e8;
		box-sizing: border-box;
	}

	.mini {
		width: 24px;
		height: 16px;
	}

	.mini.tall {
		height: 24px;
	}

	.plain-icon {
		display: flex;
		align-items: center;
		margin-left: 5px;
	}

	.row-name {
		margin-left: 13px;
		white-space: nowrap;
	}

	.row-name.after-icon {
		margin-left: 22px;
	}

	.wavy::after {
		content: "";
		position: absolute;
		left: 36px;
		right: 4px;
		bottom: 1px;
		height: 4px;
		background: repeating-linear-gradient(-55deg, transparent 0 4.500px, #6f87a8 4.500px 7px);
	}

	.root-name {
		display: flex;
		align-items: center;
		width: 224px;
		height: 24px;
		margin-left: 1px;
		padding-left: 6px;
		box-sizing: border-box;
		background: #999;
		color: #fff;
		font-weight: bold;
	}

	.mini.cube {
		flex: none;
		width: 20px;
		height: 22px;
	}

	.root-name span {
		margin-left: 23px;
		white-space: nowrap;
	}

	.badge {
		position: relative;
		flex: none;
		width: 21px;
		height: 21px;
		margin-left: 5px;
		border-radius: 50%;
		background: #0a4a96;
		color: #fff;
		font: bold 15px/21px "Liberation Serif", serif;
		text-align: center;
	}

	.badge i {
		position: absolute;
		right: -1px;
		bottom: -1px;
		width: 7px;
		height: 7px;
		border-radius: 50%;
		background: #f4f4f4;
		border: 1px solid #555;
		box-sizing: border-box;
	}

	.radio {
		flex: none;
		box-sizing: border-box;
		width: 20px;
		height: 20px;
		margin-left: 13px;
		border-radius: 50%;
		border: 2px solid #999;
		background: radial-gradient(circle, #444 0 4px, #e3e3e3 4.500px);
	}

	/* view cube */
	.viewcube {
		position: absolute;
		left: 1720px;
		top: 140px;
		width: 185px;
		height: 170px;
	}

	.cube-text {
		font-family: "DejaVu Sans", sans-serif;
		font-weight: bold;
		fill: #9a9a9a;
	}

	.cube-text.right {
		font-size: 13px;
	}

	.cube-text.front {
		font-size: 10px;
	}

	.axis {
		font: bold 16px "DejaVu Sans", sans-serif;
	}

	.axis.z {
		fill: #8a8af5;
	}

	.axis.x {
		fill: #f79c9c;
	}

	/* on-canvas distance input */
	.quick-input {
		position: absolute;
		left: 1312px;
		top: 699px;
		width: 162px;
		height: 33px;
		display: flex;
		align-items: center;
		background: #f0f0f0;
	}

	.grip {
		width: 5px;
		height: 29px;
		margin-left: 6px;
		background: repeating-linear-gradient(135deg, #ddd 0 2px, #f0f0f0 2px 4px);
	}

	.value-box {
		box-sizing: border-box;
		display: flex;
		align-items: center;
		width: 105px;
		height: 29px;
		margin-left: 10px;
		padding-left: 19px;
		background: #fff;
		border: 2px solid #ccc;
		box-shadow: -5px 0 0 -4px #bbb;
	}

	.selected-text {
		background: #0078d7;
		color: #fff;
		line-height: 20px;
		white-space: nowrap;
	}

	.text-caret {
		width: 2px;
		height: 20px;
		background: linear-gradient(90deg, #f97a12 50%, #111 50%);
	}

	.dots {
		display: flex;
		flex-direction: column;
		gap: 4px;
		margin-left: 17px;
	}

	.dots i {
		width: 4px;
		height: 4px;
		border-radius: 50%;
		background: #888;
	}

	/* edit feature */
	.panel {
		position: absolute;
		left: 1532px;
		top: 314px;
		width: 373px;
		height: 468px;
		box-sizing: border-box;
		display: flex;
		flex-direction: column;
		background: #f0f0f0;
		border: solid #ccc;
		border-width: 1px 0 2px 2px;
	}

	.panel-head {
		box-sizing: border-box;
		display: flex;
		align-items: center;
		height: 36px;
		padding: 1px 4px 0 16px;
		border-bottom: 2px solid #ccc;
		color: #666;
	}

	.panel-title {
		flex: 1;
		margin-left: 6px;
	}

	.panel-body {
		flex: 1;
		padding: 2px 0 0 18px;
	}

	.row {
		display: flex;
		align-items: center;
		height: 45px;
	}

	.field {
		flex: none;
		width: 110px;
	}

	.type-btn {
		box-sizing: border-box;
		display: flex;
		align-items: center;
		justify-content: center;
		width: 34px;
		height: 41px;
		margin-right: 9px;
	}

	.type-btn.on {
		background: #0696d7;
	}

	.type-btn svg {
		width: 24px;
		height: 28px;
	}

	.profiles {
		box-sizing: border-box;
		display: flex;
		align-items: center;
		width: 117px;
		height: 40px;
		padding-left: 11px;
		gap: 6px;
		background: #0696d7;
		color: #fff;
	}

	.profiles svg {
		width: 15px;
		height: 24px;
	}

	.clear {
		width: 14px;
		height: 14px;
		margin-left: 16px;
	}

	.select {
		box-sizing: border-box;
		display: flex;
		align-items: center;
		width: 196px;
		height: 40px;
		background: #fff;
		border: 2px solid #d2d2d2;
	}

	.select-icon {
		display: flex;
		width: 27px;
		margin-left: 2px;
		margin-right: 4px;
	}

	.select-icon svg {
		width: 24px;
		height: 24px;
		margin-left: 2px;
	}

	.select-caret {
		margin-left: auto;
		margin-right: 6px;
		border-left: 5px solid transparent;
		border-right: 5px solid transparent;
		border-top: 6px solid #333;
	}

	.input {
		box-sizing: border-box;
		display: flex;
		align-items: center;
		width: 194px;
		height: 38px;
		margin-left: 1px;
		padding-left: 3px;
		background: #fff;
		border: 2px solid #d8d8d8;
		border-top-color: #d2d2d2;
	}

	.divider {
		width: 351px;
		height: 1px;
		margin: 8px 0 6px -16px;
		border: 0;
		background: #ccc;
	}

	.panel-foot {
		box-sizing: border-box;
		display: flex;
		align-items: center;
		height: 52px;
		padding-left: 11px;
		border-top: 1px solid #666;
		margin-top: 2px;
	}

	.info {
		width: 18px;
		height: 18px;
		border-radius: 50%;
		background: #111;
		color: #fff;
		font: bold 15px/18px "Liberation Serif", serif;
		text-align: center;
	}

	.btn {
		box-sizing: border-box;
		width: 90px;
		height: 28px;
		margin-left: 15px;
		padding: 0;
		background: #e6e6e6;
		border: 2px solid #bbb;
		color: #666;
		font: 17.500px "Liberation Sans", Arial, sans-serif;
	}

	.btn.ok {
		margin-left: 131px;
	}
</style>
